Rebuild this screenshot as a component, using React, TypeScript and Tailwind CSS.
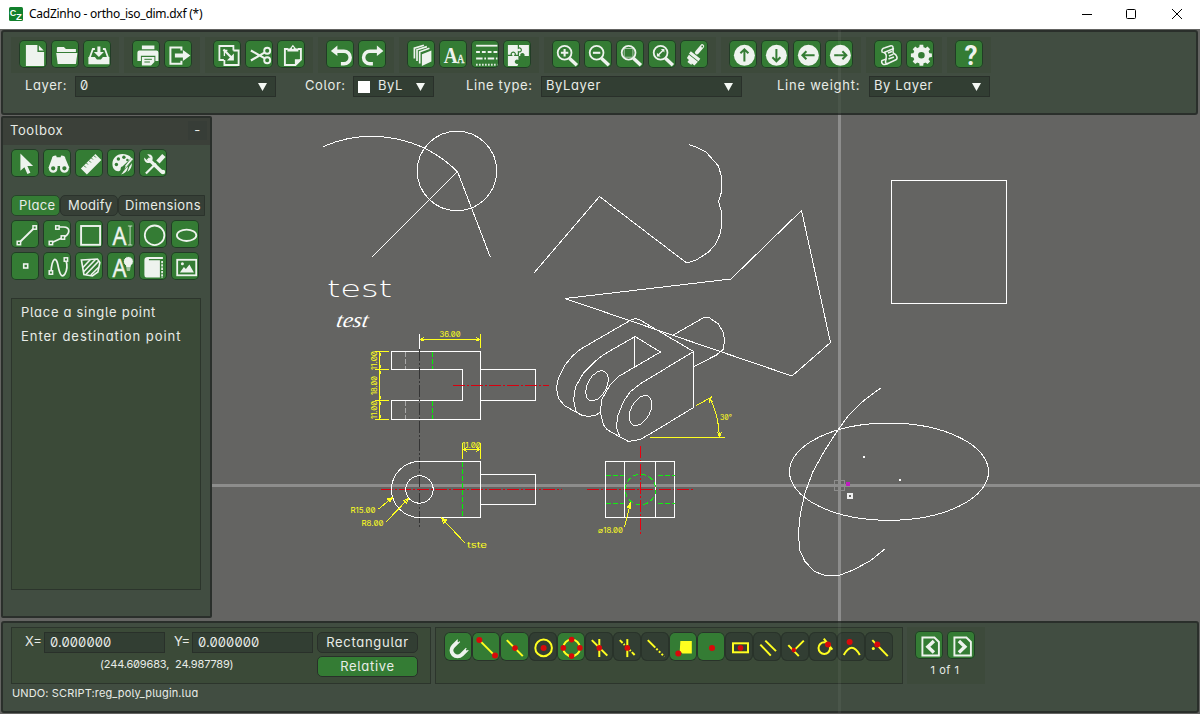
import React from 'react';

type Kids = { children?: React.ReactNode };

const W = '#eef3ee';
const G = '#347c34';
const Y = '#ffff20';
const R = '#d80a0a';

const uiFont = "font-['Inter','Noto_Sans',sans-serif] [font-feature-settings:'cv11','zero','cv05']";

/* ---------- basic widgets ---------- */

function Glyph({ children }: Kids) {
  return (
    <svg viewBox="-0.4 0 28 28" className="block h-7 w-7 overflow-visible" fill="none" stroke={W} strokeWidth={2}>
      {children}
    </svg>
  );
}

function Tool({ children }: Kids) {
  return (
    <button className="h-7 w-7 shrink-0 rounded-[5px] bg-[#347c34] shadow-[inset_0_0_0_1px_#223c26]">
      <Glyph>{children}</Glyph>
    </button>
  );
}

function Group({ children }: Kids) {
  return <div className="flex h-9 items-start gap-1 bg-[#3d4a3b] px-2 pt-[3px]">{children}</div>;
}

function Combo({ width, swatch, children }: Kids & { width: string; swatch?: boolean }) {
  return (
    <div className={`flex h-[21px] shrink-0 items-center border border-[#29302a] bg-[#323e33] pl-1 ${width}`}>
      {swatch && <span className="mr-2 h-3 w-3 bg-white" />}
      <span className="flex-1 pb-[2px]">{children}</span>
      <svg viewBox="0 0 9 8" className="mr-[8px] h-2 w-[9px]">
        <path d="M0 0H9L4.5 8z" fill="#f4f8f4" />
      </svg>
    </div>
  );
}

function Snap({ on, children }: Kids & { on?: boolean }) {
  return (
    <button
      className={`h-[29px] w-[28.050px] shrink-0 rounded-[6px] shadow-[inset_0_0_0_1px_#29332a] ${on ? 'bg-[#347c34]' : 'bg-[#323e33]'}`}
    >
      <svg viewBox="-0.3 0.4 28 28" className="block h-7 w-7" fill="none" stroke={Y} strokeWidth={2}>
        {children}
      </svg>
    </button>
  );
}

const Dot = ({ x, y, r = 2.8 }: { x: number; y: number; r?: number }) => (
  <circle cx={x} cy={y} r={r} fill={R} stroke="none" />
);

const Node = ({ x, y }: { x: number; y: number }) => (
  <rect x={x - 1.7} y={y - 1.7} width={3.4} height={3.4} fill={G} strokeWidth={1.5} />
);

/* ---------- icon parts ---------- */

function Lens({ children }: Kids) {
  return (
    <>
      <path d="M17 18.3L24.5 25.3" strokeWidth={3.4} />
      <circle cx={12.2} cy={12.8} r={6.9} strokeWidth={1.8} />
      {children}
    </>
  );
}

function Pan({ turn }: { turn: number }) {
  return (
    <>
      <circle cx={15} cy={15.3} r={10.5} fill={W} stroke="none" />
      <path d="M15 21.5V9.5M11 13.3L15 9.3L19 13.3" stroke={G} strokeWidth={2} transform={`rotate(${turn} 15 15.3)`} />
    </>
  );
}

function Toolbar() {
  return (
    <div className="flex gap-[5px] pl-2 pt-[5px]">
      <Group>
        <Tool>
          <path d="M6.5 5H18v7h6.7v14H6.5z" fill={W} stroke="none" />
          <path d="M19.5 5.5L24.3 10.5h-4.8z" fill={W} stroke="none" />
        </Tool>
        <Tool>
          <path d="M5.5 8q0-1 1-1h6l2 2h10v3H5.5z" fill={W} stroke="none" />
          <path d="M4.8 13H26L24.5 24H6.3z" fill={W} stroke="none" />
        </Tool>
        <Tool>
          <path d="M5 17h6.5l2 2.5h4l2-2.5H26v7.3H5z" fill={W} stroke="none" />
          <path d="M6.2 18L9.5 9H11.5M24.8 18L21.5 9H19.5" strokeWidth={1.8} />
          <path d="M14 6.5h3V12h3.5l-5 5-5-5H14z" fill={W} stroke="none" />
        </Tool>
      </Group>
      <Group>
        <Tool>
          <path d="M9.5 5.5H22V9.3H9.5zM5 12.5q0-2 2-2H24q2 0 2 2V21H23v-5.3H8.5V21H5z" fill={W} stroke="none" />
          <path d="M9.5 17H22v5l-3.3 3.5H9.5z" fill={W} stroke="none" />
          <path d="M12 19.3h7.5M12 22h5.5" stroke={G} strokeWidth={1} />
        </Tool>
        <Tool>
          <path d="M17 10.5V7.5H6V23.7H17V20.8" />
          <path d="M10.5 13.6h8V10L26 15.5 18.5 21V17.5h-8z" fill={W} stroke="none" />
        </Tool>
      </Group>
      <Group>
        <Tool>
          <path d="M10.5 20H6V6H20v4.5M20 10.5H25.2V25H11V20" strokeWidth={1.8} />
          <path d="M14 10.5H11V16" strokeWidth={1.3} />
          <path d="M10 9.5l8 8" strokeWidth={2.2} />
          <path d="M20.5 13.5V20.5H13.5z" fill={W} stroke="none" />
        </Tool>
        <Tool>
          <path d="M5.5 10.5L19 18.2M5.5 20.5L19 12.7" strokeWidth={2.1} />
          <circle cx={21.8} cy={10.8} r={3} strokeWidth={1.9} />
          <circle cx={21.8} cy={20.3} r={3} strokeWidth={1.9} />
        </Tool>
        <Tool>
          <path d="M10.5 9H7.5V25H18L23.5 19.5V9H20.5" strokeWidth={1.9} />
          <path d="M10 11.5V8.5h2.5L15.5 4.8 18.5 8.5H21v3z" fill={W} stroke="none" />
          <path d="M17.5 26V19.3H24.4z" fill={W} stroke="none" />
          <circle cx={15.5} cy={8} r={1} fill={G} stroke="none" />
        </Tool>
      </Group>
      <Group>
        <Tool>
          <path d="M10 11.2H17.5a6.3 6.3 0 0 1 0 12.6H14.5" strokeWidth={3.5} />
          <path d="M4.5 11L11 5.5V16z" fill={W} stroke="none" />
        </Tool>
        <Tool>
          <path d="M19 11.2H11.5a6.3 6.3 0 0 0 0 12.6H14.5" strokeWidth={3.5} />
          <path d="M25 11L18.5 5.5V16z" fill={W} stroke="none" />
        </Tool>
      </Group>
      <Group>
        <Tool>
          <path d="M14.5 14.3L24 10.5V21.5L14.5 26z" fill={W} stroke="none" />
          <path d="M12.3 23.5V11.8L22 8.2" strokeWidth={1.7} />
          <path d="M9.6 21V9.8L19.5 6.6" strokeWidth={1.7} />
          <path d="M7 18.5V8.2L16.5 5.3" strokeWidth={1.7} />
        </Tool>
        <Tool>
          <text x={4.3} y={23.3} fontSize={23} fontWeight={700} fontFamily="Liberation Serif, serif" fill={W} stroke="none" textLength={14} lengthAdjust="spacingAndGlyphs">A</text>
          <text x={17.5} y={23.3} fontSize={11.5} fontFamily="Liberation Serif, serif" fill={W} stroke={W} strokeWidth={0.4} textLength={7.5} lengthAdjust="spacingAndGlyphs">A</text>
        </Tool>
        <Tool>
          <path d="M4.7 5.7H26" strokeWidth={1.8} />
          <path d="M4.7 12H26" strokeDasharray="3.8 2" />
          <path d="M4.7 18.5H26" strokeWidth={1.8} strokeDasharray="6.5 1.7 1.7 1.7" />
          <path d="M4.7 24.7H26" strokeDasharray="1.5 1.5" />
        </Tool>
        <Tool>
          <path d="M4.5 5H25.5V16H21a2.2 2.2 0 1 0-4 0H15v4a2.2 2.2 0 1 0 0 3.5V26H4.5z" fill={W} stroke="none" />
          <path d="M15 5v3.2a2 2 0 1 1 0 3.5V15.3H11.5a2 2 0 1 0-3.3 0H4.5" stroke={G} strokeWidth={1.2} />
          <path d="M17 18.5h5V26H14" fill={G} stroke="none" />
        </Tool>
      </Group>
      <Group>
        <Tool><Lens><path d="M8.5 12.8h7.4M12.2 9.1v7.4" strokeWidth={2.1} /></Lens></Tool>
        <Tool><Lens><path d="M8.5 12.8h7.4" strokeWidth={2.1} /></Lens></Tool>
        <Tool><Lens><rect x={7.8} y={8.5} width={8.7} height={8.7} strokeWidth={1} opacity={0.6} /></Lens></Tool>
        <Tool>
          <Lens>
            <path d="M9.2 15.8l6-6" strokeWidth={1.5} />
            <path d="M8.5 12.8v3.7h3.7zM16 12.5V9h-3.6z" fill={W} stroke="none" />
          </Lens>
        </Tool>
        <Tool>
          <path d="M16.5 12.5L21.8 6.2" strokeWidth={4} strokeLinecap="round" />
          <path d="M9.5 12.5L19 20" strokeWidth={3} />
          <path d="M8.5 14.8L17.5 21.8 14 25.5l-2.5-2-.5 1.5L7 22l1.5-2L6.500 18z" fill={W} stroke="none" />
          <circle cx={21.8} cy={6.5} r={0.9} fill={G} stroke="none" />
        </Tool>
      </Group>
      <Group>
        <Tool><Pan turn={0} /></Tool>
        <Tool><Pan turn={180} /></Tool>
        <Tool><Pan turn={270} /></Tool>
        <Tool><Pan turn={90} /></Tool>
      </Group>
      <Group>
        <Tool>
          <g strokeWidth={1.5}>
            <path d="M8 12.5C6.5 10 8 8.5 10.5 7.8L16.5 5.8C19 5.3 19.5 9 17 9.5L9.5 12.5C13 14 12 17 11.5 19.5S10.5 24 13.5 23.5L21.5 19.8C24 18.500 22 14.5 19.5 13.5C18 12.5 18.5 11 19 8" />
            <path d="M13.5 23.5C9 26 6.5 23.5 7.5 20.5L12 19" />
            <path d="M13.5 13l4-1.5M14.5 16l4.5-1.8M14 19l5.5-2" strokeWidth={1.4} />
          </g>
        </Tool>
        <Tool>
          <circle cx={15} cy={15.3} r={5.8} strokeWidth={5} />
          {[0, 45, 90, 135, 180, 225, 270, 315].map((a) => (
            <path key={a} d="M12.600 9L13.200 4.800H16.800L17.400 9z" fill={W} stroke="none" transform={`rotate(${a} 15 15.3)`} />
          ))}
        </Tool>
      </Group>
      <Group>
        <Tool>
          <text x={9} y={25.3} fontSize={27} fontWeight={700} fontFamily="Roboto, sans-serif" fill={W} stroke="none" textLength={13} lengthAdjust="spacingAndGlyphs">?</text>
        </Tool>
      </Group>
    </div>
  );
}

/* ---------- left panel ---------- */

function Toolbox() {
  return (
    <aside className="ml-px mt-px flex h-[502px] w-[211px] shrink-0 flex-col rounded-[2px] border-2 border-[#2a2f2b] bg-[#414d41]">
      <header className="flex h-[27px] items-center justify-between bg-[#3b4039] pb-[3px] pl-[7px] pr-[3px] tracking-[0.6px]">
        <span>Toolbox</span>
        <span className="flex h-[19px] w-[19px] items-center justify-center bg-[#373d37]">-</span>
      </header>
      <div className="flex gap-1 pl-2 pt-1">
        <Tool><path d="M9 4.5V21.8L13 18.2 16 25 19 23.7 16 17H21.7z" fill={W} stroke="none" /></Tool>
        <Tool>
          <path d="M8.5 9.5q0-3 4.2-3l.8 2h3.5l.8-2q4.2 0 4.2 3L26 19H5z" fill={W} stroke="none" />
          <rect x={13.3} y={8.5} width={4} height={8} fill={W} stroke="none" />
          <circle cx={9.8} cy={19.3} r={3.3} fill={G} strokeWidth={2.3} />
          <circle cx={21} cy={19.3} r={3.3} fill={G} strokeWidth={2.3} />
          <path d="M15.4 17v7" stroke={G} strokeWidth={2.5} />
        </Tool>
        <Tool>
          <path d="M5.5 19.5L20 5 26 11 11.5 25.5z" fill={W} stroke="none" />
          <path d="M8.5 16.5l2 2M11 14l1.5 1.5M13.5 11.5l2 2M16 9l1.5 1.5M18.5 6.5l2 2" stroke={G} strokeWidth={1} />
        </Tool>
        <Tool>
          <path d="M15 5C9 5 5 9.5 5 15c0 5 3.5 8 7 7 2.5-.8 0-4 3-4.5l9-8.5C22 6 18.500 5 15 5z" fill={W} stroke="none" />
          <g fill={G} stroke="none">
            <circle cx={9} cy={15.5} r={1.7} /><circle cx={11} cy={10} r={1.7} /><circle cx={16.5} cy={8.3} r={1.7} /><circle cx={20} cy={11} r={1.3} />
          </g>
          <path d="M25 9.5L18.5 17.5" strokeWidth={2} />
          <path d="M18.5 16.5l2 2q-1 5.5-7 7 3-2.5 5-9zM22 17.5L24.5 14q0 6-4.5 9z" fill={W} stroke="none" />
          <path d="M25.5 10.5L16 22" stroke={G} strokeWidth={0.7} />
        </Tool>
        <Tool>
          <path d="M8.5 9.5L22.5 23" strokeWidth={3.3} />
          <path d="M4.8 8.5L8 11.7 11 8.7 7.8 5.3C12 4.3 14.5 8 12.8 11.5L10 14C7 14.5 4.300 12 4.800 8.500z" fill={W} stroke="none" />
          <circle cx={23.5} cy={23} r={2.3} fill={W} stroke="none" />
          <path d="M18.5 13L24.5 6.5" strokeWidth={4.5} />
          <path d="M16.5 14.5L6.5 24.5" strokeWidth={2.2} />
        </Tool>
      </div>
      <div className="mt-[18px] flex h-[21px] pl-2">
        <span className="flex h-[21px] w-[49px] items-center rounded-[5px] border border-[#29442b] bg-[#347c34] pl-[7px] tracking-[0.35px]">Place</span>
        <span className="flex h-[21px] w-[58px] items-center rounded-[5px] border border-[#2b332c] bg-[#363f36] pl-[7px] tracking-[0.25px]">Modify</span>
        <span className="flex h-[21px] w-[87px] items-center rounded-l-[5px] border border-[#2b332c] bg-[#363f36] pl-[6px] tracking-[0.45px]">Dimensions</span>
      </div>
      <div className="mt-1 grid grid-cols-[repeat(6,28px)] gap-1 pl-2">
        <Tool><path d="M7.5 23L23.3 7.5" strokeWidth={1.8} /><Node x={7.5} y={23} /><Node x={23.3} y={7.5} /></Tool>
        <Tool>
          <path d="M7.5 23L19.5 17.5C27 14.5 27.5 7 20 7H14" strokeWidth={1.7} />
          <Node x={7.5} y={23} /><Node x={19.5} y={17.5} /><Node x={14} y={7.5} />
        </Tool>
        <Tool><rect x={5.7} y={6} width={19} height={18.8} strokeWidth={1.9} /></Tool>
        <Tool>
          <text x={5} y={24.5} fontSize={24.5} fontFamily="Noto Sans, sans-serif" fill={W} stroke={W} strokeWidth={0.4} textLength={14} lengthAdjust="spacingAndGlyphs">A</text>
          <path d="M22.7 6V25M20.5 6h4.4M20.5 25h4.4" strokeWidth={1} opacity={0.75} />
        </Tool>
        <Tool><circle cx={15.2} cy={15.3} r={9.8} strokeWidth={1.8} /></Tool>
        <Tool><ellipse cx={15.2} cy={15.3} rx={9.7} ry={5.7} strokeWidth={1.8} /></Tool>
        <Tool><rect x={12.3} y={12} width={4} height={4} strokeWidth={1.6} /></Tool>
        <Tool>
          <path d="M7.5 20C9 4 13 5 14.5 13S18 27 21.5 22Q25 16 22.5 8" strokeWidth={1.7} />
          <Node x={7.5} y={20.5} /><Node x={22.5} y={7.5} />
        </Tool>
        <Tool>
          <path d="M6 8L22 7L24.5 10.5L22.5 20L17 24L8.5 22.5z" strokeWidth={1.6} />
          <path d="M7.5 15.5L15 7.5M8 20L20 7.5M10.5 22.5L23.5 9M15.5 23L23.5 15" strokeWidth={1.6} />
        </Tool>
        <Tool>
          <text x={5} y={24.5} fontSize={24.5} fontFamily="Noto Sans, sans-serif" fill={W} stroke={W} strokeWidth={0.4} textLength={14} lengthAdjust="spacingAndGlyphs">A</text>
          <circle cx={21} cy={9.5} r={5} fill={W} stroke={G} strokeWidth={1} />
          <path d="M18.5 13h5l-1 6h-3z" fill={W} stroke="none" />
          <path d="M18.5 16h5M19 18h4" stroke={G} strokeWidth={0.8} />
        </Tool>
        <Tool>
          <path d="M8.5 5H23.5V7H9.5V8.3H20.5V25.5H7Q5 25.5 5 23V8Q5 5 8.500 5z" fill={W} stroke="none" />
          <path d="M22.7 9V26" strokeWidth={1.7} strokeDasharray="2.3 1" />
        </Tool>
        <Tool>
          <rect x={5.8} y={7.8} width={19} height={15.5} strokeWidth={1.8} />
          <path d="M8.5 20.5L12.5 15l2 2 3.5-4.500 4.500 8z" fill={W} stroke="none" />
          <circle cx={11} cy={11.8} r={1.5} fill={W} stroke="none" />
        </Tool>
      </div>
      <div className="ml-2 mt-[18px] flex h-[292px] w-[190px] flex-col border border-[#2c352c] bg-[#3b4a38] pl-[9px] pt-px leading-6">
        <span className="whitespace-nowrap tracking-[0.7px]">Place a single point</span>
        <span className="whitespace-nowrap tracking-[0.95px]">Enter destination point</span>
      </div>
    </aside>
  );
}

/* ---------- drawing area ---------- */

const dimFont = { fontFamily: 'Inter, sans-serif', fontSize: 7.5, fill: Y, stroke: 'none' } as const;

function Dim({ x, y, w, turn = 0, children }: Kids & { x: number; y: number; w: number; turn?: number }) {
  return (
    <text transform={`translate(${x} ${y}) rotate(${turn})`} textLength={w} lengthAdjust="spacingAndGlyphs">
      {children}
    </text>
  );
}

function Drawing() {
  return (
    <svg viewBox="212 115 988 506" className="block h-[506px] w-[988px]" fill="none" stroke="#fff" strokeWidth={1} shapeRendering="crispEdges">
      <path d="M839.5 115V621M212 485.5H1200" stroke="#8d8d8c" strokeWidth={3} />
      <path d="M323.5 146.5A121 121 0 0 1 457 171.3" />
      <circle cx={457} cy={171} r={39.7} />
      <path d="M372 257L457.5 171.5L490.5 257.5" />
      <path d="M533.5 273.5L599.5 196.5L686 262.5H689L697 259.5L708 252.5L715 245L720 234.5L721.5 226V212L718.5 201.5L721.5 192V177L718.5 166L706 152L697 147.5L689 144.5" />
      <path d="M565 298.5L731 279L801.5 210.5L830.5 342.5L792 376z" />
      <rect x={891.5} y={180.5} width={115} height={123} />
      <text x={327} y={297} fontFamily="DejaVu Sans Light, DejaVu Sans, sans-serif" fontWeight={200} fontSize={23} fill="#fff" stroke="none" textLength={65} lengthAdjust="spacingAndGlyphs">test</text>
      <text transform="translate(335.5 327) skewX(-10)" fontFamily="Liberation Serif, serif" fontStyle="italic" fontSize={21} fill="#fff" stroke="none" textLength={32} lengthAdjust="spacingAndGlyphs">test</text>

      {/* top view */}
      <path d="M391.5 351.5H480.5V419.5H391.5V400.5H462.5V369.5H391.5zM480.5 369.5H535.5V400.5H480.5" />
      <path d="M405.5 352V369M405.5 401V419" stroke="#a9a9a9" strokeDasharray="5 2" />
      <path d="M432.5 352V369M432.5 401V419M462.5 462V517" stroke="#00f400" strokeDasharray="5 2" />
      <path d="M419.5 349V529" stroke="#343434" strokeDasharray="12 2 2 2" />
      <path d="M419.5 334V349" />
      <path d="M453 385.5H549M381 489.5H562M587 489.5H694" stroke="#d8000e" strokeDasharray="12 2 2 2" />
      <path d="M640.5 446V535" stroke="#e80010" strokeDasharray="12 2 2 2" />

      {/* front view */}
      <path d="M419.5 461.5H480.5V517.5H419.5A28 28 0 0 1 419.5 461.5zM480.5 474.5H535.5V504.5H480.5" />
      <circle cx={419.5} cy={489.5} r={13.7} />

      {/* side view */}
      <path d="M605.5 461.5H674.5V517.5H605.5zM624.5 461V517M655.5 461V517" />
      <path d="M606 475.5H624M658 475.5H675M606 503.5H624M658 503.5H675" stroke="#10f010" strokeDasharray="5 2" />
      <circle cx={640.5} cy={489.5} r={15.3} stroke="#10f010" strokeDasharray="5 3" />

      {/* isometric view */}
      <path d="M600 412.5L595 415.5L588 416.5L581.5 415L565 406L558.5 398.5L556.5 388L558.5 378L565 365L573 355.5L580 349.5L630 320.5L635 318.5L640 320L693.5 351.5V407.5L650 434L640 439.5L628.5 441.5L620 437L616.5 428L617.5 416.5L623.5 401.5L630 392L640 384L693.5 351.5" />
      <path d="M581.5 415.5L576 411.5L573.5 400L575.5 387L583.5 373L595 361.5L603 355L635 336.5L660.5 352L618.5 376.5L610 385L601.5 400L600.5 413L603.5 425L607 429.5L620 437M634.5 337V367.5" />
      <ellipse cx={597} cy={385.7} rx={9.5} ry={16.3} transform="rotate(28 597 385.7)" />
      <ellipse cx={640.5} cy={410.5} rx={9.5} ry={16.3} transform="rotate(28 640.5 410.5)" />
      <path d="M672.5 335.5L704 317.5H709L718.5 324L723.5 333L724.5 340L723.5 349L716.5 355L694 366.5" />

      {/* dimensions */}
      <g stroke={Y}>
        <path d="M419.5 339.5H480.5M480.5 334V348M420 339.500l4-2M420 339.500l4 1.500M480 339.500l-4-2M480 339.500l-4 1.500" />
        <path d="M379.5 351V419M375 351.5H389M375 369.5H389M375 400.5H389M375 419.5H389" />
        <path d="M379.5 352l1.5 4M379.5 369l1.5-4M379.5 370l1.5 4M379.5 400l1.5-4M379.5 401l1.5 4M379.5 419l1.5-4" />
        <path d="M462.5 443V459M480.5 443V459M462.5 449.5H480.5M463 449.5l4-2M463 449.5l4 2M480 449.5l-4-2M480 449.5l-4 2" />
        <path d="M378.5 509L392.5 497.5M392.5 497.5l-5 1.5 2.500 3zM386 522L408.500 498.500M408.500 498.500l-5 2 3 3z" />
        <path d="M465 543L441.5 518M441.5 518l2 5 3-3z" />
        <path d="M624.5 527L630.5 502.500M630.500 502.500l-3 5 3 1z" />
        <path d="M650 437.5H725M696.500 405.500L712.500 396.500M709.500 398Q718.500 414 719.500 437M709.500 398l-.5 5M709.500 398l3.500 4M719.500 437l-2-5M719.500 437l2-5" />
      </g>
      <g {...dimFont}>
        <Dim x={439.5} y={337} w={21}>36.00</Dim>
        <Dim x={462} y={448} w={19}>11.00</Dim>
        <Dim x={350.5} y={513} w={25}>R15.00</Dim>
        <Dim x={361.5} y={526} w={22}>R8.00</Dim>
        <Dim x={467} y={548} w={20}>tste</Dim>
        <Dim x={598} y={533} w={25}>⌀18.00</Dim>
        <Dim x={720} y={420} w={12}>30°</Dim>
        <Dim x={377} y={370} w={19} turn={-90}>11.00</Dim>
        <Dim x={377} y={395} w={19} turn={-90}>18.00</Dim>
        <Dim x={377} y={419} w={18} turn={-90}>11.00</Dim>
      </g>

      <ellipse cx={889} cy={471.7} rx={99.5} ry={48.6} />
      <path d="M881.5 387.5L871 395L861.5 402.5L848 416L838 430L825 450L813 471.5L805 493L800.5 513L798.5 531.5L799.5 550L805 561.5L814.5 571.5L825 575.5H839L853 570L870 561L885.5 548.5" />
      <g stroke="none" fill="#fff">
        <rect x={863} y={456} width={2} height={2} />
        <rect x={899} y={479} width={2} height={2} />
      </g>
      <rect x={846} y={482} width={4} height={4} fill="#c01cc0" stroke="none" />
      <rect x={834.5} y={480.5} width={10} height={10} stroke="#8d8d8c" />
      <rect x={848} y={494} width={4} height={4} stroke="#f0f0f0" strokeWidth={1.500} />
    </svg>
  );
}

/* ---------- bottom panel ---------- */

function Snaps() {
  return (
    <div className="flex h-[57px] w-[468px] items-start border border-[#2c352c] bg-[#3b4a38] pl-[8.4px] pt-1">
      <Snap on>
        <path d="M14.5 8L9 13.5a6 6 0 0 0 8.5 8.5L23 16.5" stroke={W} strokeWidth={4} />
        <path d="M13.5 9L15.5 7M22 17.5L24 15.5" stroke={G} strokeWidth={1.5} />
      </Snap>
      <Snap on><path d="M7 7.5L23 23.5" /><Dot x={7} y={7.5} r={3} /><Dot x={22.7} y={23} r={3} /></Snap>
      <Snap on><path d="M6.5 7.5L22.5 23.5" /><Dot x={14.7} y={15.5} /></Snap>
      <Snap><circle cx={14.3} cy={15.3} r={8.3} /><Dot x={14.3} y={15.3} r={3} /></Snap>
      <Snap on>
        <circle cx={14.3} cy={15.3} r={8.3} />
        <Dot x={14.3} y={7} /><Dot x={14.3} y={23.5} /><Dot x={6} y={15.3} /><Dot x={22.6} y={15.3} />
      </Snap>
      <Snap><path d="M6.5 7.5L22 23M14 6.5V24.5" /><Dot x={14} y={15.3} /></Snap>
      <Snap><path d="M6.5 7.5L22 23" strokeDasharray="4 1.5 1.5 1.5" /><path d="M14 6.5V24.5" /><Dot x={14} y={15.3} /></Snap>
      <Snap><path d="M6.5 7.5L14 15" /><path d="M15 16L23 24" strokeDasharray="2 1.7" /></Snap>
      <Snap on><path d="M12 9.5H21.500V20H13.500L11.500 18z" fill={Y} /><Dot x={9} y={20.8} r={3} /></Snap>
      <Snap on><Dot x={14.7} y={15.5} r={3} /></Snap>
      <Snap><rect x={7.7} y={10.7} width={15} height={9} /><Dot x={15.2} y={15.3} /></Snap>
      <Snap><path d="M7 12L17.5 23M12 8L22.7 18.5" /></Snap>
      <Snap><path d="M7 12.5L17.5 23.5M22.5 8L12 18.5" /><Dot x={12.5} y={17.5} r={2.3} /></Snap>
      <Snap><circle cx={15} cy={15.5} r={5.8} /><path d="M14.5 6L23 17" /><Dot x={18.7} y={11.8} r={3} /></Snap>
      <Snap><path d="M6.5 22.5Q14.5 8 22.5 22.5" /><Dot x={12.3} y={9.5} r={3} /></Snap>
      <Snap><path d="M7 7.5L22.5 23.5" /><circle cx={8} cy={16} r={1.5} fill={Y} stroke="none" /><Dot x={12} y={12} r={3} /></Snap>
    </div>
  );
}

function StatusPanel() {
  return (
    <footer className="relative ml-px h-[92px] w-[1198px] rounded-[3px] border-2 border-[#2a2f2b] bg-[#414d41]">
      <span className="absolute -bottom-0.5 -top-0.5 left-[835px] w-[3px] bg-white/5" />
      <div className="flex pl-2 pt-1">
        <div className="mr-1 flex h-[57px] w-[420px] border border-[#2c352c] bg-[#3b4a38] pt-1">
          <div className="flex w-[304px] flex-col">
            <div className="flex h-[21px] items-center">
              <span className="w-[32px] pb-[2px] pl-[13px]">X=</span>
              <span className="flex h-[21px] w-[121px] items-center border border-[#29302a] bg-[#323e33] pb-px pl-[5px] tracking-[0.1px]">0.000000</span>
              <span className="w-[27px] pb-[2px] pl-[9px]">Y=</span>
              <span className="flex h-[21px] w-[121px] items-center border border-[#29302a] bg-[#323e33] pb-px pl-[5px] tracking-[0.1px]">0.000000</span>
            </div>
            <span className="whitespace-pre pl-[88px] pt-px text-[11px] leading-5 tracking-[-0.17px]">(244.609683,  24.987789)</span>
          </div>
          <div className="flex flex-col gap-[3px] pl-px">
            <span className="flex h-[21px] w-[101px] items-center justify-center rounded-[5px] border border-[#29302a] bg-[#323e33] tracking-[0.7px]">Rectangular</span>
            <span className="flex h-[21px] w-[101px] items-center justify-center rounded-[5px] border border-[#29302a] bg-[#347c34] tracking-[0.7px]">Relative</span>
          </div>
        </div>
        <Snaps />
        <div className="ml-[4px] flex h-[57px] w-[78px] flex-col bg-[#3d4a3b] pl-2 pt-1">
          <div className="flex gap-1">
            <Tool><path d="M19 6.5H7V24.5H23.5V11z" strokeWidth={1.9} /><path d="M18.5 10L12.5 15.8L18.5 21.5" strokeWidth={3.4} /></Tool>
            <Tool><path d="M19 6.5H7V24.5H23.5V11z" strokeWidth={1.9} /><path d="M11.5 10L17.5 15.8L11.5 21.5" strokeWidth={3.4} /></Tool>
          </div>
          <span className="w-[60px] text-center text-[11px] leading-[22px] tracking-[0.5px]">1 of 1</span>
        </div>
      </div>
      <div className="-mt-px pl-[9px] text-[11px] leading-5 tracking-[0.13px]">UNDO: SCRIPT:reg_poly_plugin.lua</div>
    </footer>
  );
}

export default function App() {
  return (
    <div className={`flex h-[714px] w-[1200px] flex-col overflow-hidden bg-[#646462] text-[13px] leading-none text-[#e8ece7] ${uiFont}`}>
      <div className="flex h-[29px] shrink-0 items-center bg-white pb-[2px] text-black">
        <svg viewBox="0 0 14 14" className="ml-[9px] h-[14px] w-[14px] overflow-visible">
          <rect width={14} height={14} rx={1.5} fill="#12802c" />
          <text x={0.8} y={8.5} fontSize={9} fontWeight={700} fontFamily="Liberation Sans, sans-serif" fill="#fff">C</text>
          <text x={7} y={12.8} fontSize={9.5} fontWeight={700} fontFamily="Liberation Sans, sans-serif" fill="#fff">Z</text>
        </svg>
        <span className="ml-1.5 flex-1 font-['Noto_Sans',sans-serif] text-[12px] tracking-[-0.26px]">CadZinho - ortho_iso_dim.dxf (*)</span>
        <svg viewBox="0 0 100 12" className="mr-[18px] h-3 w-[100px]" fill="none" stroke="#000" strokeWidth={1}>
          <path d="M0 6.5H10" />
          <rect x={44.5} y={1.5} width={9} height={9} rx={1} />
          <path d="M90 1L100 11M100 1L90 11" />
        </svg>
      </div>
      <div className="relative ml-px mt-px h-[85px] w-[1197px] shrink-0 rounded-[3px] border-2 border-[#2a2f2b] bg-[#414d41]">
        <Toolbar />
        <div className="mt-[3px] flex items-center pl-[22px] tracking-[0.6px]">
          <span className="w-[50px] pb-[2px]">Layer:</span>
          <Combo width="w-[201px]">0</Combo>
          <span className="ml-[29px] w-[48px] pb-[2px]">Color:</span>
          <Combo width="w-[81px]" swatch>ByL</Combo>
          <span className="ml-8 w-[75px] whitespace-nowrap pb-[2px]">Line type:</span>
          <Combo width="w-[201px]">ByLayer</Combo>
          <span className="ml-[35px] w-[92px] whitespace-nowrap pb-[2px] tracking-[0.75px]">Line weight:</span>
          <Combo width="w-[121px]">By Layer</Combo>
        </div>
        <span className="absolute -bottom-0.5 -top-0.5 left-[835px] w-[3px] bg-white/5" />
      </div>
      <main className="flex h-[506px] shrink-0">
        <Toolbox />
        <Drawing />
      </main>
      <StatusPanel />
    </div>
  );
}
